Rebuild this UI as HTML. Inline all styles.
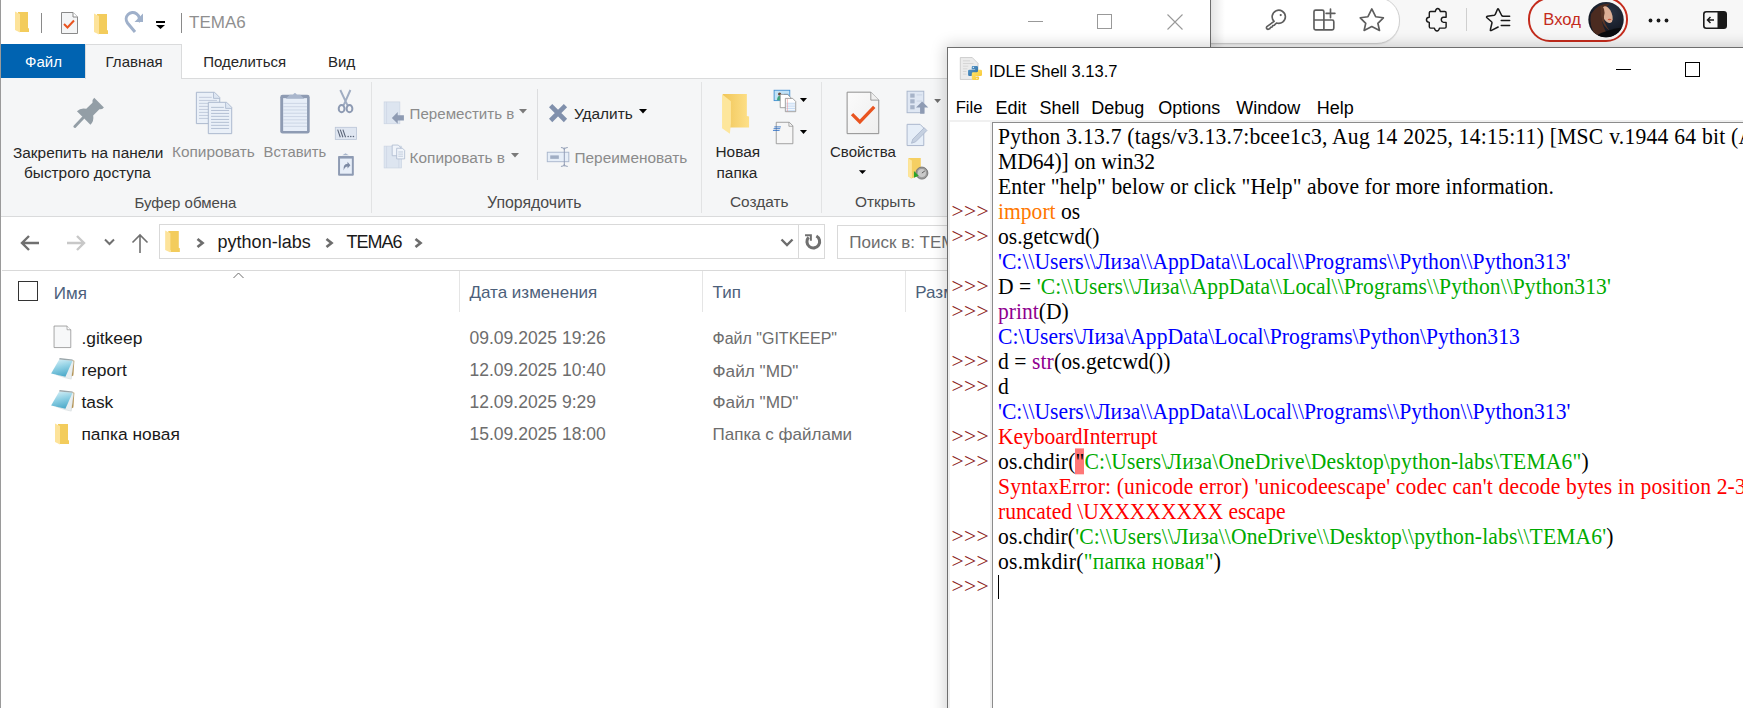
<!DOCTYPE html>
<html><head><meta charset="utf-8"><style>
html,body{margin:0;padding:0;width:1743px;height:723px;overflow:hidden;background:#fff;}
body{position:relative;font-family:'Liberation Sans', sans-serif;}
.t{position:absolute;white-space:pre;line-height:1;}
svg{overflow:visible}
</style></head><body>
<div style="position:absolute;left:1211px;top:0px;width:532px;height:47px;background:#f7f7f7;"></div><div style="position:absolute;left:1100px;top:-3px;width:300px;height:47px;background:#fff;border:1px solid #d0d0d0;border-radius:0 23px 23px 0;box-sizing:border-box;box-shadow:0 1px 1px rgba(0,0,0,0.06);"></div><div style="position:absolute;left:1211px;top:0px;width:14px;height:47px;background:linear-gradient(to right,rgba(0,0,0,0.10),rgba(0,0,0,0));"></div><svg style="position:absolute;left:1260px;top:4px;" width="192" height="32" viewBox="0 0 1743 290"><g fill="none" stroke="#5d5d5d" stroke-width="15" stroke-linejoin="round" stroke-linecap="round"><path d="M128,158 A60,60 0 1 1 150,172 L130,192 L116,196 L110,208 L96,212 L88,224 L70,230 Q52,222 62,205 Z"/><path d="M490,145 V70 Q490,55 505,55 H565 Q580,55 580,70 V235 H505 Q490,235 490,220 Z M490,145 H655 Q670,145 670,160 V220 Q670,235 655,235 H580 M640,45 V125 M600,85 H680"/><path d="M1015,45 L1050,115 L1120,125 L1070,175 L1085,240 L1015,205 L945,240 L960,175 L910,125 L980,115 Z"/></g><circle cx="188" cy="100" r="10" fill="#5d5d5d"/></svg><svg style="position:absolute;left:1420px;top:4px;" width="32" height="32" viewBox="0 0 723 723"><path d="M210,200 Q210,170 240,170 L345,170 Q360,100 400,100 Q445,100 460,170 L560,170 Q590,170 590,200 L590,300 L530,300 Q480,305 480,360 Q485,410 530,415 L590,415 L590,520 Q590,545 560,545 L440,545 Q425,610 385,610 Q340,610 325,545 L240,545 Q210,545 210,515 L210,415 Q150,410 145,360 Q150,300 210,300 Z" fill="none" stroke="#1a1a1a" stroke-width="32" stroke-linejoin="round"/></svg><div style="position:absolute;left:1466px;top:8px;width:1.3px;height:23px;background:#cfcfcf;"></div><svg style="position:absolute;left:1480px;top:4px;" width="36" height="32" viewBox="0 0 813 723"><path d="M410,520 L250,600 Q225,605 235,575 L270,430 Q275,415 260,400 L150,305 Q140,285 165,275 L320,255 Q335,250 345,235 L395,120 Q405,100 420,120 L490,260 Q500,275 520,275 L670,275 M480,375 H670 M480,485 H670" fill="none" stroke="#1a1a1a" stroke-width="34" stroke-linejoin="round" stroke-linecap="round"/></svg><div style="position:absolute;left:1528px;top:-3px;width:100px;height:45px;border:2px solid #c42b1c;border-radius:22px;box-sizing:border-box;"></div><div class="t" style="left:1543.3px;top:11.95px;font-size:16.6px;color:#c42b1c;">Вход</div><svg style="position:absolute;left:1584px;top:0px;" width="46" height="40" viewBox="0 0 831 723"><defs><clipPath id="avc"><circle cx="398" cy="355" r="320"/></clipPath><radialGradient id="avg" cx="0.6" cy="0.3" r="0.8"><stop offset="0" stop-color="#2a3345"/><stop offset="1" stop-color="#0c1018"/></radialGradient></defs><circle cx="398" cy="355" r="320" fill="url(#avg)"/><g clip-path="url(#avc)"><path d="M130,250 Q250,60 470,70 Q340,160 320,320 Q320,470 440,640 Q280,700 170,580 Q90,420 130,250 Z" fill="#4b2b20"/><ellipse cx="420" cy="265" rx="85" ry="160" transform="rotate(-22 420 265)" fill="#dcae95"/><path d="M300,100 Q400,140 360,300 Q350,420 470,560 Q330,470 310,300 Q300,180 300,100 Z" fill="#5a3526"/><ellipse cx="462" cy="352" rx="34" ry="12" fill="#c9563d"/><path d="M230,640 Q420,530 760,490 L760,723 L230,723 Z" fill="#0b0c0f"/></g></svg><svg style="position:absolute;left:1648px;top:18px;" width="21" height="5" viewBox="0 0 21 5"><circle cx="2.5" cy="2.5" r="1.9" fill="#1a1a1a"/><circle cx="10.5" cy="2.5" r="1.9" fill="#1a1a1a"/><circle cx="18.5" cy="2.5" r="1.9" fill="#1a1a1a"/></svg><svg style="position:absolute;left:1703px;top:11px;" width="24" height="18" viewBox="0 0 24 18"><rect x="0.8" y="0.8" width="22.4" height="16.4" rx="2.5" fill="none" stroke="#1a1a1a" stroke-width="1.6"/><path d="M14.5,0.8 H21 Q23.2,0.8 23.2,3 V15 Q23.2,17.2 21,17.2 H14.5 Z" fill="#1a1a1a"/><path d="M11,9 H4.5 M7.5,6 L4.5,9 L7.5,12" fill="none" stroke="#1a1a1a" stroke-width="1.5"/></svg><div style="position:absolute;left:0px;top:0px;width:1211px;height:708px;background:#fff;"></div><div style="position:absolute;left:0px;top:0px;width:1px;height:708px;background:#9a9a9a;"></div><div style="position:absolute;left:1210px;top:0px;width:1px;height:47px;background:#6e6e6e;"></div><svg style="position:absolute;left:15px;top:11px;" width="14" height="21" viewBox="0 0 14 21"><path d="M3,1 L13,1 L13,17 L14,17.5 L14,21 L5,21 L5,19 L3,19 Z" fill="#f3cc5c"/>
<path d="M0,0.5 L5,3 L5,21.5 L0,19 Z" fill="#fde39a"/></svg><div style="position:absolute;left:41px;top:13px;width:1px;height:20px;background:#8a8a8a;"></div><svg style="position:absolute;left:61px;top:12px;" width="17" height="22" viewBox="0 0 17 22"><path d="M0.5,0.5 L12,0.5 L16.5,5 L16.5,21.5 L0.5,21.5 Z" fill="#f4f5f6" stroke="#8a8a8a"/><path d="M12,0.5 L12,5 L16.5,5" fill="#fff" stroke="#8a8a8a"/><polyline points="3,12 6.5,15.5 13,8.5" fill="none" stroke="#e95420" stroke-width="2"/></svg><svg style="position:absolute;left:94px;top:13px;" width="14" height="21" viewBox="0 0 14 21"><path d="M3,1 L13,1 L13,17 L14,17.5 L14,21 L5,21 L5,19 L3,19 Z" fill="#f3cc5c"/>
<path d="M0,0.5 L5,3 L5,21.5 L0,19 Z" fill="#fde39a"/></svg><svg style="position:absolute;left:125px;top:13px;" width="18" height="21" viewBox="0 0 18 21"><path d="M13.5,9 A6.5,6.5 0 1 0 2.5,10 L10,19" fill="none" stroke="#9fb0ca" stroke-width="3"/><path d="M18,0.5 L18,9 L9.5,9 Z" fill="#9fb0ca"/></svg><div style="position:absolute;left:156px;top:21px;width:9px;height:1.5px;background:#000;"></div><svg style="position:absolute;left:156px;top:25px;" width="9" height="4" viewBox="0 0 9 4"><path d="M0,0 L9,0 L4.5,4 Z" fill="#000"/></svg><div style="position:absolute;left:181px;top:13px;width:1px;height:20px;background:#8a8a8a;"></div><div class="t" style="left:189px;top:14.31px;font-size:17px;color:#8f8f8f;">TEMA6</div><div style="position:absolute;left:1028px;top:21px;width:15px;height:1px;background:#999;"></div><div style="position:absolute;left:1097px;top:14px;width:14px;height:14px;border:1px solid #999;box-sizing:border-box;width:15px;height:15px;"></div><svg style="position:absolute;left:1167px;top:14px;" width="16" height="16" viewBox="0 0 16 16"><path d="M0.5,0.5 L15.5,15.5 M15.5,0.5 L0.5,15.5" stroke="#999" stroke-width="1.1"/></svg><div style="position:absolute;left:1px;top:44px;width:84px;height:34px;background:#0063b1;"></div><div class="t" style="left:25px;top:54.30px;font-size:15px;color:#fff;">Файл</div><div style="position:absolute;left:85px;top:44px;width:97px;height:35px;background:#f5f6f7;border:1px solid #dadbdc;border-bottom:none;box-sizing:border-box;"></div><div class="t" style="left:105.6px;top:54.30px;font-size:15px;color:#262626;">Главная</div><div class="t" style="left:203.3px;top:54.30px;font-size:15px;color:#262626;">Поделиться</div><div class="t" style="left:328px;top:54.30px;font-size:15px;color:#262626;">Вид</div><div style="position:absolute;left:182px;top:78px;width:1028px;height:1px;background:#dadbdc;"></div><div style="position:absolute;left:1px;top:79px;width:1209px;height:137px;background:#f5f6f7;"></div><div style="position:absolute;left:1px;top:78px;width:84px;height:1px;background:#f5f6f7;"></div><div style="position:absolute;left:1px;top:216px;width:1209px;height:1px;background:#dadbdc;"></div><svg style="position:absolute;left:60px;top:85px;" width="60" height="50" viewBox="0 0 868 723"><path d="M495,185 L635,325 Q605,360 570,350 L480,440 Q495,520 440,575 L245,380 Q300,325 380,345 L470,255 Q460,215 495,185 Z" fill="#939ea6"/><path d="M335,475 L215,600" stroke="#939ea6" stroke-width="42" stroke-linecap="round"/></svg><div class="t" style="left:13px;top:144.96px;font-size:15.4px;color:#262626;">Закрепить на панели</div><div class="t" style="left:24px;top:164.96px;font-size:15.4px;color:#262626;">быстрого доступа</div><svg style="position:absolute;left:190px;top:88px;" width="50" height="50" viewBox="0 0 723 723"><path d="M92,62 L355,62 L430,137 L430,515 L92,515 Z" fill="#eaf0f8" stroke="#a9b6cc" stroke-width="14"/><path d="M340,62 L340,150 L430,150" fill="#dde6f2" stroke="#a9b6cc" stroke-width="12"/>
<g stroke="#b9c4d6" stroke-width="12"><path d="M130,135 L315,135 M130,180 L390,180 M130,222 L390,222 M130,266 L390,266 M130,310 L390,310 M130,353 L390,353 M130,397 L390,397 M130,440 L390,440"/></g>
<path d="M265,207 L530,207 L603,280 L603,660 L265,660 Z" fill="#eaf0f8" stroke="#a9b6cc" stroke-width="14"/><path d="M515,207 L515,295 L603,295" fill="#dde6f2" stroke="#a9b6cc" stroke-width="12"/>
<g stroke="#a9b6cc" stroke-width="12"><path d="M305,280 L490,280 M305,325 L565,325 M305,368 L565,368 M305,410 L565,410 M305,455 L565,455 M305,497 L565,497 M305,540 L565,540 M305,585 L565,585"/></g></svg><div class="t" style="left:172px;top:144.46px;font-size:15.4px;color:#8b8b8b;">Копировать</div><svg style="position:absolute;left:270px;top:85px;" width="90" height="95" viewBox="0 0 685 723"><rect x="78" y="75" width="224" height="295" rx="18" fill="#8e9bb3"/><rect x="100" y="100" width="182" height="250" fill="#e7eef8"/>
<g stroke="#c5d0e0" stroke-width="6"><path d="M100,140 H282 M100,165 H282 M100,190 H282 M100,215 H282 M100,240 H282 M100,265 H282 M100,290 H282 M100,315 H282"/></g>
<path d="M120,105 L150,75 L175,75 Q190,45 205,75 L230,75 L262,105 Z" fill="#a9b6cc"/>
<path d="M535,38 L590,155 M612,38 L560,155" stroke="#a0adc2" stroke-width="15"/><ellipse cx="545" cy="180" rx="22" ry="27" fill="none" stroke="#8e9bb3" stroke-width="15"/><ellipse cx="605" cy="180" rx="22" ry="27" fill="none" stroke="#8e9bb3" stroke-width="15"/>
<rect x="497" y="322" width="162" height="92" fill="#dfe6f1" stroke="#b9c4d6" stroke-width="6"/><path d="M515,340 L535,398 M535,340 L555,398 M555,340 L575,398" stroke="#5a6478" stroke-width="8"/><g fill="#5a6478"><circle cx="595" cy="392" r="6"/><circle cx="615" cy="392" r="6"/><circle cx="635" cy="392" r="6"/></g>
<rect x="518" y="540" width="120" height="150" rx="6" fill="#8e9bb3"/><rect x="533" y="560" width="90" height="115" fill="#e7eef8"/><path d="M550,535 L575,520 L600,535 Z" fill="#a9b6cc"/><path d="M560,650 Q555,600 590,600 L590,585 L612,610 L590,635 L590,620 Q570,620 560,650 Z" fill="#7c8aa4"/></svg><div class="t" style="left:263.6px;top:144.97px;font-size:14.8px;color:#8b8b8b;">Вставить</div><div class="t" style="left:134.5px;top:195.30px;font-size:15.0px;color:#4a4a4a;">Буфер обмена</div><div style="position:absolute;left:371px;top:82px;width:1px;height:131px;background:#e2e3e4;"></div><svg style="position:absolute;left:378px;top:95px;" width="32" height="77" viewBox="0 0 300 723"><rect x="57" y="65" width="148" height="205" fill="#dde5f0" stroke="#c9d3e2" stroke-width="6"/><path d="M80,65 V270" stroke="#c9d3e2" stroke-width="6"/><path d="M130,215 L185,160 L185,190 L243,190 L243,240 L185,240 L185,270 Z" fill="#8e9bb3"/>
<rect x="57" y="480" width="165" height="205" fill="#dde5f0" stroke="#c9d3e2" stroke-width="6"/><path d="M80,480 V685 M195,480 V685" stroke="#c9d3e2" stroke-width="6"/>
<path d="M133,470 L190,470 L210,490 L210,570 L133,570 Z" fill="#f0f4fa" stroke="#a9b6cc" stroke-width="7"/><path d="M175,500 L230,500 L250,520 L250,600 L175,600 Z" fill="#f0f4fa" stroke="#a9b6cc" stroke-width="7"/><path d="M190,535 H235 M190,555 H235 M190,575 H235" stroke="#a9b6cc" stroke-width="6"/></svg><div class="t" style="left:409.6px;top:106.22px;font-size:15.1px;color:#8b8b8b;">Переместить в</div><svg style="position:absolute;left:519px;top:109px;" width="8" height="5" viewBox="0 0 8 5"><path d="M0,0 L8,0 L4,4.5 Z" fill="#7a7a7a"/></svg><div class="t" style="left:409.6px;top:149.96px;font-size:15.4px;color:#8b8b8b;">Копировать в</div><svg style="position:absolute;left:511px;top:153px;" width="8" height="5" viewBox="0 0 8 5"><path d="M0,0 L8,0 L4,4.5 Z" fill="#7a7a7a"/></svg><div style="position:absolute;left:537px;top:89px;width:1px;height:91px;background:#dcdddf;"></div><svg style="position:absolute;left:542px;top:96px;" width="32" height="76" viewBox="0 0 304 723"><path d="M82,92 L223,233 M223,92 L82,233" stroke="#8090ac" stroke-width="44"/>
<rect x="50" y="535" width="205" height="90" fill="#e6eef8" stroke="#a9b6cc" stroke-width="9"/><rect x="78" y="565" width="82" height="33" fill="#a0aec4"/><path d="M212,490 V670 M180,490 Q212,490 212,510 Q212,490 245,490 M180,670 Q212,670 212,650 Q212,670 245,670" fill="none" stroke="#8e9bb3" stroke-width="9"/></svg><div class="t" style="left:574px;top:105.96px;font-size:15.4px;color:#262626;">Удалить</div><svg style="position:absolute;left:639px;top:109px;" width="8" height="5" viewBox="0 0 8 5"><path d="M0,0 L8,0 L4,4.5 Z" fill="#000"/></svg><div class="t" style="left:574.5px;top:149.96px;font-size:15.4px;color:#8b8b8b;">Переименовать</div><div class="t" style="left:487px;top:194.54px;font-size:15.9px;color:#4a4a4a;">Упорядочить</div><div style="position:absolute;left:701px;top:82px;width:1px;height:131px;background:#e2e3e4;"></div><svg style="position:absolute;left:715px;top:86px;" width="100" height="64" viewBox="0 0 1130 723"><defs><linearGradient id="fg1" x1="0" x2="1"><stop offset="0" stop-color="#f1c659"/><stop offset="1" stop-color="#fde089"/></linearGradient></defs>
<path d="M88,90 L360,90 L360,338 L385,345 L385,470 L170,470 L170,420 L88,420 Z" fill="url(#fg1)"/><path d="M80,92 L180,172 L180,420 L168,540 L80,478 Z" fill="#fde69c"/>
<rect x="668" y="48" width="177" height="117" fill="#c2e2f6" stroke="#3f8fd2" stroke-width="10"/><circle cx="730" cy="90" r="18" fill="#6a4a3a"/><path d="M700,160 Q705,110 735,110 Q760,115 765,160 Z" fill="#3aa57a"/><path d="M780,95 H830" stroke="#3f8fd2" stroke-width="12"/>
<path d="M737,95 L820,95 L855,130 L855,245 L737,245 Z" fill="#fff" stroke="#8c8c8c" stroke-width="9"/>
<path d="M795,140 L878,140 L912,175 L912,290 L795,290 Z" fill="#fff" stroke="#8c8c8c" stroke-width="9"/><path d="M805,195 H905 M805,215 H905 M805,235 H905 M805,255 H905 M805,275 H905" stroke="#8fb8e8" stroke-width="6"/><path d="M818,145 V288" stroke="#e88" stroke-width="6"/>
<path d="M960,135 L1040,135 L1000,180 Z" fill="#000"/>
<path d="M692,410 L840,410 L880,450 L880,652 L692,652 Z" fill="#f6f6f6" stroke="#8c8c8c" stroke-width="9"/><path d="M835,410 L835,455 L880,455" fill="none" stroke="#8c8c8c" stroke-width="8"/>
<path d="M670,462 H745 M662,482 H737 M655,502 H730" stroke="#1f66c2" stroke-width="9"/>
<path d="M960,497 L1040,497 L1000,542 Z" fill="#000"/></svg><div class="t" style="left:715.5px;top:144.36px;font-size:15.4px;color:#262626;">Новая</div><div class="t" style="left:716.5px;top:164.96px;font-size:15.4px;color:#262626;">папка</div><div class="t" style="left:730px;top:194.46px;font-size:15.4px;color:#4a4a4a;">Создать</div><div style="position:absolute;left:821px;top:82px;width:1px;height:131px;background:#e2e3e4;"></div><svg style="position:absolute;left:840px;top:86px;" width="105" height="99" viewBox="0 0 767 723"><defs><linearGradient id="pg1" x1="0" y1="0" x2="1" y2="1"><stop offset="0" stop-color="#fbfbfb"/><stop offset="1" stop-color="#eeeeee"/></linearGradient></defs>
<path d="M52,45 L225,45 L283,103 L283,348 L52,348 Z" fill="url(#pg1)" stroke="#8a8a8a" stroke-width="7"/><path d="M225,45 L225,103 L283,103" fill="#f0f0f0" stroke="#8a8a8a" stroke-width="6"/>
<polyline points="88,205 145,262 250,152" fill="none" stroke="#e95420" stroke-width="24"/>
<rect x="490" y="38" width="122" height="157" fill="#dfe7f3" stroke="#a9b6cc" stroke-width="7"/><rect x="513" y="55" width="32" height="30" fill="#a6b3c8"/><rect x="513" y="97" width="32" height="30" fill="#a6b3c8"/><rect x="513" y="140" width="32" height="30" fill="#a6b3c8"/><path d="M560,65 H600 M560,110 H600" stroke="#c5d0e0" stroke-width="6"/>
<path d="M555,157 L600,113 L645,157 L617,157 L617,203 L585,203 L585,157 Z" fill="#8e9bb3"/>
<path d="M688,95 L738,95 L713,125 Z" fill="#6d6d6d"/>
<path d="M490,280 L585,280 L612,307 L612,435 L490,435 Z" fill="#e6eef8" stroke="#a9b6cc" stroke-width="7"/><path d="M522,418 L532,388 L615,305 L635,325 L552,408 Z" fill="#c5d0e0" stroke="#a9b6cc" stroke-width="6"/>
<path d="M508,525 L590,525 L590,650 L520,675 L498,660 L498,530 Z" fill="#f5cf62"/><path d="M498,530 L525,545 L525,675 L498,660 Z" fill="#fde69c"/>
<circle cx="598" cy="636" r="44" fill="#9a9a9a" stroke="#6d6d6d" stroke-width="6"/><circle cx="598" cy="636" r="30" fill="#c9c9c9"/><path d="M540,620 L575,655 L540,670 Z" fill="#2aa22a"/><path d="M598,636 L620,620" stroke="#444" stroke-width="6"/>
<path d="M138,615 L190,615 L164,642 Z" fill="#000"/></svg><div class="t" style="left:830px;top:144.30px;font-size:15px;color:#262626;">Свойства</div><div class="t" style="left:855px;top:194.46px;font-size:15.4px;color:#4a4a4a;">Открыть</div><svg style="position:absolute;left:18px;top:233px;" width="24" height="20" viewBox="0 0 24 20"><path d="M21,10 H4 M11,3 L4,10 L11,17" fill="none" stroke="#707070" stroke-width="2.4"/></svg><svg style="position:absolute;left:64px;top:233px;" width="24" height="20" viewBox="0 0 24 20"><path d="M3,10 H20 M13,3 L20,10 L13,17" fill="none" stroke="#c8c8c8" stroke-width="2.4"/></svg><svg style="position:absolute;left:104px;top:238px;" width="11" height="8" viewBox="0 0 11 8"><path d="M1,1.5 L5.5,6 L10,1.5" fill="none" stroke="#707070" stroke-width="2"/></svg><svg style="position:absolute;left:131px;top:233px;" width="18" height="20" viewBox="0 0 18 20"><path d="M9,20 V2 M1.5,9.5 L9,2 L16.5,9.5" fill="none" stroke="#707070" stroke-width="1.6"/></svg><div style="position:absolute;left:159px;top:224px;width:640px;height:35px;border:1px solid #d9d9d9;box-sizing:border-box;"></div><div style="position:absolute;left:798px;top:224px;width:27px;height:35px;border:1px solid #d9d9d9;box-sizing:border-box;"></div><svg style="position:absolute;left:165px;top:230px;" width="15" height="22" viewBox="0 0 14 21"><path d="M3,1 L13,1 L13,17 L14,17.5 L14,21 L5,21 L5,19 L3,19 Z" fill="#f3cc5c"/>
<path d="M0,0.5 L5,3 L5,21.5 L0,19 Z" fill="#fde39a"/></svg><svg style="position:absolute;left:196px;top:238px;" width="9" height="10" viewBox="0 0 9 10"><path d="M1.5,1 L6.5,5 L1.5,9" fill="none" stroke="#6d6d6d" stroke-width="2.7"/></svg><div class="t" style="left:217.6px;top:232.56px;font-size:18px;color:#1a1a1a;">python-labs</div><svg style="position:absolute;left:325px;top:238px;" width="9" height="10" viewBox="0 0 9 10"><path d="M1.5,1 L6.5,5 L1.5,9" fill="none" stroke="#6d6d6d" stroke-width="2.7"/></svg><div class="t" style="left:346.5px;top:232.56px;font-size:18px;color:#1a1a1a;letter-spacing:-1px;">TEMA6</div><svg style="position:absolute;left:414px;top:238px;" width="9" height="10" viewBox="0 0 9 10"><path d="M1.5,1 L6.5,5 L1.5,9" fill="none" stroke="#6d6d6d" stroke-width="2.7"/></svg><svg style="position:absolute;left:780px;top:238px;" width="14" height="9" viewBox="0 0 14 9"><path d="M1.5,1.5 L7,7 L12.5,1.5" fill="none" stroke="#6d6d6d" stroke-width="2.4"/></svg><svg style="position:absolute;left:800px;top:229px;" width="26" height="26" viewBox="0 0 723 723"><path d="M455,195 A177,177 0 1 1 240,230" fill="none" stroke="#707070" stroke-width="85"/><path d="M140,145 H330 V325 H275 V200 H140 Z" fill="#707070"/></svg><div style="position:absolute;left:837px;top:225px;width:200px;height:34px;border:1px solid #d9d9d9;box-sizing:border-box;"></div><div class="t" style="left:849.3px;top:234.41px;font-size:17px;color:#6d6d6d;">Поиск в: TEMA6</div><div style="position:absolute;left:2px;top:270px;width:1208px;height:1px;background:#d9d9d9;"></div><svg style="position:absolute;left:233px;top:272px;" width="11" height="7" viewBox="0 0 11 7"><path d="M0.5,6 L5.5,1 L10.5,6" fill="none" stroke="#6d6d6d" stroke-width="1"/></svg><div style="position:absolute;left:18px;top:281px;width:20px;height:20px;border:1.4px solid #333;box-sizing:border-box;"></div><div class="t" style="left:53.8px;top:284.61px;font-size:17px;color:#4c607a;">Имя</div><div style="position:absolute;left:459px;top:271px;width:1px;height:41px;background:#e5e5e5;"></div><div class="t" style="left:469.5px;top:284.31px;font-size:17px;color:#4c607a;">Дата изменения</div><div style="position:absolute;left:702px;top:271px;width:1px;height:41px;background:#e5e5e5;"></div><div class="t" style="left:712.5px;top:284.31px;font-size:17px;color:#4c607a;">Тип</div><div style="position:absolute;left:905px;top:271px;width:1px;height:41px;background:#e5e5e5;"></div><div class="t" style="left:915.3px;top:284.31px;font-size:17px;color:#4c607a;">Размер</div><svg style="position:absolute;left:48px;top:322px;" width="30" height="60" viewBox="0 0 362 723"><path d="M73,48 L230,48 L275,93 L275,308 L73,308 Z" fill="#f7f8f9" stroke="#8a8a8a" stroke-width="9"/><path d="M230,48 L230,93 L275,93" fill="#fff" stroke="#8a8a8a" stroke-width="8"/></svg><div class="t" style="left:81.4px;top:330.17px;font-size:17.4px;color:#1a1a1a;">.gitkeep</div><div class="t" style="left:469.5px;top:330.09px;font-size:17.5px;color:#6d6d6d;">09.09.2025 19:26</div><div class="t" style="left:712.5px;top:331.36px;font-size:16.0px;color:#6d6d6d;">Файл "GITKEEP"</div><svg style="position:absolute;left:48px;top:354px;" width="30" height="30" viewBox="0 0 723 723"><defs><linearGradient id="np1" x1="0.3" y1="0" x2="0.6" y2="1"><stop offset="0" stop-color="#d2eef6"/><stop offset="0.45" stop-color="#8fd0e4"/><stop offset="1" stop-color="#4aa8c8"/></linearGradient></defs>
<path d="M585,150 L635,165 L610,520 L560,540 Z" fill="#b08a40"/>
<path d="M200,500 L590,160 L620,180 L560,605 L420,575 Z" fill="#e9eef0" stroke="#c5ced2" stroke-width="10"/>
<path d="M270,130 L592,165 L420,548 L75,468 Z" fill="url(#np1)"/>
<path d="M280,95 L595,135 L592,165 L270,130 Z" fill="#9aa6aa"/></svg><div class="t" style="left:81.4px;top:362.37px;font-size:17.4px;color:#1a1a1a;">report</div><div class="t" style="left:469.5px;top:362.29px;font-size:17.5px;color:#6d6d6d;">12.09.2025 10:40</div><div class="t" style="left:712.5px;top:362.54px;font-size:17.2px;color:#6d6d6d;">Файл "MD"</div><svg style="position:absolute;left:48px;top:386px;" width="30" height="30" viewBox="0 0 723 723"><defs><linearGradient id="np2" x1="0.3" y1="0" x2="0.6" y2="1"><stop offset="0" stop-color="#d2eef6"/><stop offset="0.45" stop-color="#8fd0e4"/><stop offset="1" stop-color="#4aa8c8"/></linearGradient></defs>
<path d="M585,150 L635,165 L610,520 L560,540 Z" fill="#b08a40"/>
<path d="M200,500 L590,160 L620,180 L560,605 L420,575 Z" fill="#e9eef0" stroke="#c5ced2" stroke-width="10"/>
<path d="M270,130 L592,165 L420,548 L75,468 Z" fill="url(#np2)"/>
<path d="M280,95 L595,135 L592,165 L270,130 Z" fill="#9aa6aa"/></svg><div class="t" style="left:81.4px;top:394.07px;font-size:17.4px;color:#1a1a1a;">task</div><div class="t" style="left:469.5px;top:393.99px;font-size:17.5px;color:#6d6d6d;">12.09.2025 9:29</div><div class="t" style="left:712.5px;top:394.24px;font-size:17.2px;color:#6d6d6d;">Файл "MD"</div><svg style="position:absolute;left:55px;top:423px;" width="14" height="21" viewBox="0 0 14 21"><path d="M3,1 L13,1 L13,17 L14,17.5 L14,21 L5,21 L5,19 L3,19 Z" fill="#f3cc5c"/>
<path d="M0,0.5 L5,3 L5,21.5 L0,19 Z" fill="#fde39a"/></svg><div class="t" style="left:81.4px;top:425.87px;font-size:17.4px;color:#1a1a1a;">папка новая</div><div class="t" style="left:469.5px;top:425.79px;font-size:17.5px;color:#6d6d6d;">15.09.2025 18:00</div><div class="t" style="left:712.5px;top:426.21px;font-size:17.0px;color:#6d6d6d;">Папка с файлами</div><div style="position:absolute;left:947px;top:47px;width:820px;height:700px;background:#fff;border:1px solid #6e6e6e;box-sizing:border-box;box-shadow:0 0 14px 2px rgba(0,0,0,0.18);"></div><svg style="position:absolute;left:955px;top:52px;" width="32" height="32" viewBox="0 0 723 723"><defs><linearGradient id="pyb" x1="0" y1="0" x2="1" y2="1"><stop offset="0" stop-color="#5a9fd4"/><stop offset="1" stop-color="#306998"/></linearGradient><linearGradient id="pyy" x1="0" y1="0" x2="1" y2="1"><stop offset="0" stop-color="#ffe873"/><stop offset="1" stop-color="#f6c12a"/></linearGradient></defs>
<path d="M120,125 L390,125 L520,255 L520,620 L120,620 Z" fill="#ececec" stroke="#b8b8b8" stroke-width="14"/><path d="M180,200 H340 M180,260 H420 M180,320 H300 M180,380 H280 M180,440 H260 M180,500 H260" stroke="#c8c8c8" stroke-width="14"/>
<path d="M400,315 H490 Q520,315 520,345 V470 Q520,495 495,495 H405 Q380,495 380,520 V545 H325 Q295,545 295,515 V430 Q295,400 325,400 H455 V388 H378 V345 Q378,315 400,315 Z" fill="url(#pyb)"/><circle cx="415" cy="345" r="14" fill="#fff"/>
<path d="M505,630 H410 Q380,630 380,600 V485 Q380,455 410,455 H495 Q520,455 520,430 V400 H580 Q610,400 610,430 V515 Q610,545 580,545 H465 V557 H545 V600 Q545,630 515,630 Z" fill="url(#pyy)"/><circle cx="495" cy="600" r="14" fill="#fff"/></svg><div class="t" style="left:989px;top:62.83px;font-size:16.5px;color:#000;">IDLE Shell 3.13.7</div><div style="position:absolute;left:1616px;top:69px;width:15px;height:1.3px;background:#000;"></div><div style="position:absolute;left:1685px;top:62px;width:15px;height:15px;border:1.4px solid #000;box-sizing:border-box;"></div><div class="t" style="left:955.7px;top:100.15px;font-size:16.6px;color:#000;">File</div><div class="t" style="left:995.6px;top:98.96px;font-size:18px;color:#000;">Edit</div><div class="t" style="left:1039.5px;top:98.96px;font-size:18px;color:#000;">Shell</div><div class="t" style="left:1091.2px;top:98.96px;font-size:18px;color:#000;">Debug</div><div class="t" style="left:1158.3px;top:98.96px;font-size:18px;color:#000;">Options</div><div class="t" style="left:1236.3px;top:98.96px;font-size:18px;color:#000;">Window</div><div class="t" style="left:1316.7px;top:98.96px;font-size:18px;color:#000;">Help</div><div style="position:absolute;left:948px;top:120px;width:795px;height:2px;background:#f0f0f0;"></div><div style="position:absolute;left:948px;top:122px;width:2px;height:586px;background:#f0f0f0;"></div><div style="position:absolute;left:990px;top:122px;width:2px;height:586px;background:#f0f0f0;"></div><div style="position:absolute;left:992px;top:122px;width:751px;height:1px;background:#8c8c8c;"></div><div style="position:absolute;left:992px;top:122px;width:1px;height:586px;background:#8c8c8c;"></div><div class="t" style="left:998px;top:126.61px;font-size:21.6px;font-family:'Liberation Serif', serif;letter-spacing:0.242px;transform:scaleY(1.08);transform-origin:0 18.09px;"><span style="color:#000">Python 3.13.7 (tags/v3.13.7:bcee1c3, Aug 14 2025, 14:15:11) [MSC v.1944 64 bit (AMD64)]</span></div><div class="t" style="left:998px;top:151.61px;font-size:21.6px;font-family:'Liberation Serif', serif;letter-spacing:0px;transform:scaleY(1.08);transform-origin:0 18.09px;"><span style="color:#000">MD64)] on win32</span></div><div class="t" style="left:998px;top:176.61px;font-size:21.6px;font-family:'Liberation Serif', serif;letter-spacing:0.08px;transform:scaleY(1.08);transform-origin:0 18.09px;"><span style="color:#000">Enter "help" below or click "Help" above for more information.</span></div><div class="t" style="left:998px;top:201.61px;font-size:21.6px;font-family:'Liberation Serif', serif;letter-spacing:0px;transform:scaleY(1.08);transform-origin:0 18.09px;"><span style="color:#ff7700">import</span><span style="color:#000"> os</span></div><div class="t" style="left:998px;top:226.61px;font-size:21.6px;font-family:'Liberation Serif', serif;letter-spacing:0px;transform:scaleY(1.08);transform-origin:0 18.09px;"><span style="color:#000">os.getcwd()</span></div><div class="t" style="left:998px;top:251.61px;font-size:21.6px;font-family:'Liberation Serif', serif;letter-spacing:0.034px;transform:scaleY(1.08);transform-origin:0 18.09px;"><span style="color:#0000ff">'C:\\Users\\Лиза\\AppData\\Local\\Programs\\Python\\Python313'</span></div><div class="t" style="left:998px;top:276.61px;font-size:21.6px;font-family:'Liberation Serif', serif;letter-spacing:0.06px;transform:scaleY(1.08);transform-origin:0 18.09px;"><span style="color:#000">D = </span><span style="color:#00aa00">'C:\\Users\\Лиза\\AppData\\Local\\Programs\\Python\\Python313'</span></div><div class="t" style="left:998px;top:301.61px;font-size:21.6px;font-family:'Liberation Serif', serif;letter-spacing:0px;transform:scaleY(1.08);transform-origin:0 18.09px;"><span style="color:#900090">print</span><span style="color:#000">(D)</span></div><div class="t" style="left:998px;top:326.61px;font-size:21.6px;font-family:'Liberation Serif', serif;letter-spacing:0.023px;transform:scaleY(1.08);transform-origin:0 18.09px;"><span style="color:#0000ff">C:\Users\Лиза\AppData\Local\Programs\Python\Python313</span></div><div class="t" style="left:998px;top:351.61px;font-size:21.6px;font-family:'Liberation Serif', serif;letter-spacing:0.07px;transform:scaleY(1.08);transform-origin:0 18.09px;"><span style="color:#000">d = </span><span style="color:#900090">str</span><span style="color:#000">(os.getcwd())</span></div><div class="t" style="left:998px;top:376.61px;font-size:21.6px;font-family:'Liberation Serif', serif;letter-spacing:0px;transform:scaleY(1.08);transform-origin:0 18.09px;"><span style="color:#000">d</span></div><div class="t" style="left:998px;top:401.61px;font-size:21.6px;font-family:'Liberation Serif', serif;letter-spacing:0.034px;transform:scaleY(1.08);transform-origin:0 18.09px;"><span style="color:#0000ff">'C:\\Users\\Лиза\\AppData\\Local\\Programs\\Python\\Python313'</span></div><div class="t" style="left:998px;top:426.61px;font-size:21.6px;font-family:'Liberation Serif', serif;letter-spacing:-0.075px;transform:scaleY(1.08);transform-origin:0 18.09px;"><span style="color:#ff0000">KeyboardInterrupt</span></div><div class="t" style="left:998px;top:451.61px;font-size:21.6px;font-family:'Liberation Serif', serif;letter-spacing:0.147px;transform:scaleY(1.08);transform-origin:0 18.09px;"><span style="color:#000">os.chdir(</span><span style="background:#ff7777;color:#000">"</span><span style="color:#00aa00">C:\Users\Лиза\OneDrive\Desktop\python-labs\TEMA6"</span><span style="color:#000">)</span></div><div class="t" style="left:998px;top:476.61px;font-size:21.6px;font-family:'Liberation Serif', serif;letter-spacing:0.14px;transform:scaleY(1.08);transform-origin:0 18.09px;"><span style="color:#ff0000">SyntaxError: (unicode error) 'unicodeescape' codec can't decode bytes in position 2-3: t</span></div><div class="t" style="left:998px;top:501.61px;font-size:21.6px;font-family:'Liberation Serif', serif;letter-spacing:-0.054px;transform:scaleY(1.08);transform-origin:0 18.09px;"><span style="color:#ff0000">runcated \UXXXXXXXX escape</span></div><div class="t" style="left:998px;top:526.61px;font-size:21.6px;font-family:'Liberation Serif', serif;letter-spacing:0.112px;transform:scaleY(1.08);transform-origin:0 18.09px;"><span style="color:#000">os.chdir(</span><span style="color:#00aa00">'C:\\Users\\Лиза\\OneDrive\\Desktop\\python-labs\\TEMA6'</span><span style="color:#000">)</span></div><div class="t" style="left:998px;top:551.61px;font-size:21.6px;font-family:'Liberation Serif', serif;letter-spacing:0.25px;transform:scaleY(1.08);transform-origin:0 18.09px;"><span style="color:#000">os.mkdir(</span><span style="color:#00aa00">"папка новая"</span><span style="color:#000">)</span></div><div class="t" style="left:951.5px;top:201.21px;font-size:21.6px;color:#8b1a1a;font-family:'Liberation Serif', serif;letter-spacing:0.3px;">&gt;&gt;&gt;</div><div class="t" style="left:951.5px;top:226.21px;font-size:21.6px;color:#8b1a1a;font-family:'Liberation Serif', serif;letter-spacing:0.3px;">&gt;&gt;&gt;</div><div class="t" style="left:951.5px;top:276.21px;font-size:21.6px;color:#8b1a1a;font-family:'Liberation Serif', serif;letter-spacing:0.3px;">&gt;&gt;&gt;</div><div class="t" style="left:951.5px;top:301.21px;font-size:21.6px;color:#8b1a1a;font-family:'Liberation Serif', serif;letter-spacing:0.3px;">&gt;&gt;&gt;</div><div class="t" style="left:951.5px;top:351.21px;font-size:21.6px;color:#8b1a1a;font-family:'Liberation Serif', serif;letter-spacing:0.3px;">&gt;&gt;&gt;</div><div class="t" style="left:951.5px;top:376.21px;font-size:21.6px;color:#8b1a1a;font-family:'Liberation Serif', serif;letter-spacing:0.3px;">&gt;&gt;&gt;</div><div class="t" style="left:951.5px;top:426.21px;font-size:21.6px;color:#8b1a1a;font-family:'Liberation Serif', serif;letter-spacing:0.3px;">&gt;&gt;&gt;</div><div class="t" style="left:951.5px;top:451.21px;font-size:21.6px;color:#8b1a1a;font-family:'Liberation Serif', serif;letter-spacing:0.3px;">&gt;&gt;&gt;</div><div class="t" style="left:951.5px;top:526.21px;font-size:21.6px;color:#8b1a1a;font-family:'Liberation Serif', serif;letter-spacing:0.3px;">&gt;&gt;&gt;</div><div class="t" style="left:951.5px;top:551.21px;font-size:21.6px;color:#8b1a1a;font-family:'Liberation Serif', serif;letter-spacing:0.3px;">&gt;&gt;&gt;</div><div class="t" style="left:951.5px;top:576.21px;font-size:21.6px;color:#8b1a1a;font-family:'Liberation Serif', serif;letter-spacing:0.3px;">&gt;&gt;&gt;</div><div style="position:absolute;left:998px;top:575px;width:1.2px;height:23.5px;background:#000;"></div><div style="position:absolute;left:0px;top:708px;width:1743px;height:15px;background:#fff;"></div>
</body></html>
